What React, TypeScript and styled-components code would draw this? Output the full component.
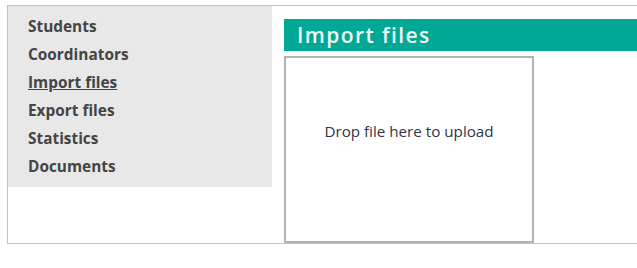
import React from 'react';
import styled, { createGlobalStyle } from 'styled-components';

const navItems = [
  'Students',
  'Coordinators',
  'Import files',
  'Export files',
  'Statistics',
  'Documents',
];

const App = () => {
  return (
    <>
      <GlobalStyle />
      <Frame>
        <Sidebar>
          {navItems.map(item => (
            <NavLink key={item} active={item === 'Import files'}>
              {item}
            </NavLink>
          ))}
        </Sidebar>
        <Content>
          <Header>Import files</Header>
          <DropZone>Drop file here to upload</DropZone>
        </Content>
      </Frame>
    </>
  );
};

const GlobalStyle = createGlobalStyle`
  body {
    margin: 0;
    background: #ffffff;
    font-family: 'Open Sans', 'Noto Sans', sans-serif;
    overflow: hidden;
  }
`;

const Frame = styled.div`
  display: flex;
  align-items: flex-start;
  margin: 5px 0 0 7px;
  height: 237px;
  border: 1px solid #adc8d6;
  border-right: none;
`;

const Sidebar = styled.nav`
  display: flex;
  flex-direction: column;
  flex-shrink: 0;
  width: 244px;
  padding: 7px 0 6px 20px;
  background-color: #e8e8e8;
`;

const NavLink = styled.a<{ active?: boolean }>`
  font-size: 15.4px;
  font-weight: 700;
  line-height: 28px;
  color: #444444;
  text-decoration: ${p => (p.active ? 'underline' : 'none')};
  cursor: pointer;
`;

const Content = styled.div`
  display: flex;
  flex-direction: column;
  flex-grow: 1;
  padding: 13px 0 0 12px;
`;

const Header = styled.h2`
  margin: 0 0 5px;
  height: 32px;
  padding-left: 13px;
  background-color: #00a895;
  color: #effcf8;
  font-size: 21px;
  font-weight: 600;
  line-height: 32px;
  letter-spacing: 1.4px;
`;

const DropZone = styled.div`
  display: flex;
  align-items: center;
  justify-content: center;
  box-sizing: border-box;
  width: 250px;
  height: 187px;
  padding-bottom: 38px;
  border: 2px solid #b3b3b3;
  color: #333344;
  font-size: 15.2px;
`;

export default App;
